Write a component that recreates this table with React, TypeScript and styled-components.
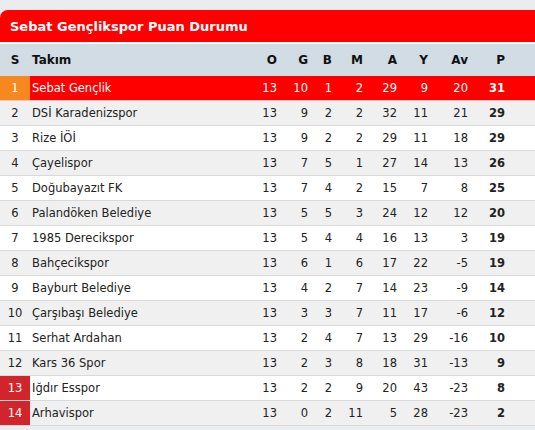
import React from 'react'
import styled, { createGlobalStyle, css } from 'styled-components'

const GlobalStyle = createGlobalStyle`
  html, body {
    margin: 0;
    padding: 0;
    background: #e9edf0;
    font-family: 'DejaVu Sans', Verdana, sans-serif;
  }
`

const Wrap = styled.div`
  width: 535px;
  padding-top: 10px;
`

const Title = styled.div`
  height: 32px;
  background: #ff0000;
  border-top-left-radius: 8px;
  color: #fff;
  font-weight: bold;
  font-size: 13px;
  line-height: 33px;
  padding-left: 10px;
  border-bottom: 2px solid #fff;
`

const cols = '30px 207px 40px 31px 24px 31px 34px 31px 40px 37px 30px'

const HeadRow = styled.div`
  display: grid;
  grid-template-columns: ${cols};
  height: 32px;
  align-items: center;
  background: #d2dce5;
  color: #111;
  font-weight: bold;
  font-size: 12px;
`

type RowProps = { $leader?: boolean; $odd?: boolean }

const Row = styled.div<RowProps>`
  display: grid;
  grid-template-columns: ${cols};
  height: 24px;
  align-items: center;
  border-bottom: 1px solid #d9d9d9;
  font-size: 11.5px;
  color: #222;
  background: ${({ $odd }) => ($odd ? '#ffffff' : '#f0f0f0')};
  ${({ $leader }) =>
    $leader &&
    css`
      background: #ff0000;
      color: #fff;
      border-bottom-color: #f7c4c4;
    `}
`

type RankKind = 'leader' | 'drop' | 'normal'

const Rank = styled.div<{ $kind: RankKind }>`
  height: 100%;
  display: flex;
  align-items: center;
  justify-content: center;
  ${({ $kind }) =>
    $kind === 'leader' &&
    css`
      background: #f7881f;
      color: #fff;
    `}
  ${({ $kind }) =>
    $kind === 'drop' &&
    css`
      background: #d2252b;
      color: #fff;
    `}
`

const Team = styled.div`
  padding-left: 2px;
  white-space: nowrap;
`

const Num = styled.div<{ $bold?: boolean }>`
  text-align: right;
  font-weight: ${({ $bold }) => ($bold ? 'bold' : 'normal')};
`

const HeadCell = styled.div<{ $center?: boolean }>`
  text-align: ${({ $center }) => ($center ? 'center' : 'right')};
`

const HeadTeam = styled.div`
  padding-left: 2px;
`

const rows: [string, number, number, number, number, number, number, number, number][] = [
  ['Sebat Gençlik', 13, 10, 1, 2, 29, 9, 20, 31],
  ['DSİ Karadenizspor', 13, 9, 2, 2, 32, 11, 21, 29],
  ['Rize İÖİ', 13, 9, 2, 2, 29, 11, 18, 29],
  ['Çayelispor', 13, 7, 5, 1, 27, 14, 13, 26],
  ['Doğubayazıt FK', 13, 7, 4, 2, 15, 7, 8, 25],
  ['Palandöken Belediye', 13, 5, 5, 3, 24, 12, 12, 20],
  ['1985 Derecikspor', 13, 5, 4, 4, 16, 13, 3, 19],
  ['Bahçecikspor', 13, 6, 1, 6, 17, 22, -5, 19],
  ['Bayburt Belediye', 13, 4, 2, 7, 14, 23, -9, 14],
  ['Çarşıbaşı Belediye', 13, 3, 3, 7, 11, 17, -6, 12],
  ['Serhat Ardahan', 13, 2, 4, 7, 13, 29, -16, 10],
  ['Kars 36 Spor', 13, 2, 3, 8, 18, 31, -13, 9],
  ['Iğdır Esspor', 13, 2, 2, 9, 20, 43, -23, 8],
  ['Arhavispor', 13, 0, 2, 11, 5, 28, -23, 2],
]

const headers = ['O', 'G', 'B', 'M', 'A', 'Y', 'Av', 'P']

const App = () => {
  return (
    <Wrap>
      <GlobalStyle />
      <Title>Sebat Gençlikspor Puan Durumu</Title>
      <HeadRow>
        <HeadCell $center>S</HeadCell>
        <HeadTeam>Takım</HeadTeam>
        {headers.map((h) => (
          <HeadCell key={h}>{h}</HeadCell>
        ))}
        <div />
      </HeadRow>
      {rows.map((r, i) => {
        const pos = i + 1
        const kind: RankKind = pos === 1 ? 'leader' : pos >= 13 ? 'drop' : 'normal'
        return (
          <Row key={r[0]} $leader={pos === 1} $odd={pos % 2 === 1}>
            <Rank $kind={kind}>{pos}</Rank>
            <Team>{r[0]}</Team>
            {r.slice(1, 8).map((v, j) => (
              <Num key={j}>{v}</Num>
            ))}
            <Num $bold>{r[8]}</Num>
            <div />
          </Row>
        )
      })}
    </Wrap>
  )
}

export default App
